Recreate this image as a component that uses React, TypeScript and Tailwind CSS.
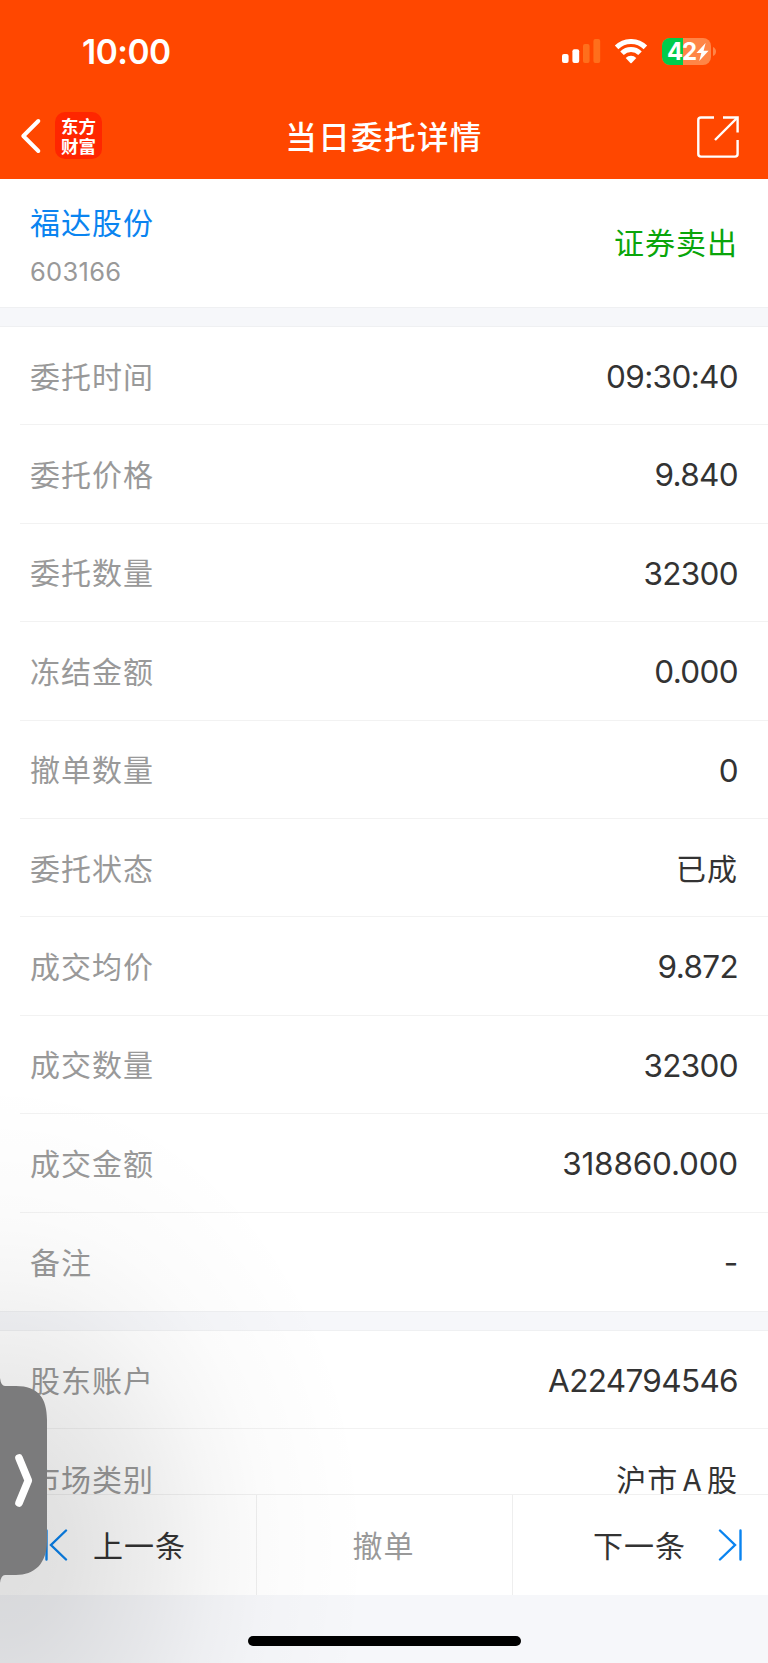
import type { ReactNode } from 'react'

type DetailItem = {
  label: string
  value: string
  cjk?: boolean
  wide?: boolean
}

const orderItems: DetailItem[] = [
  { label: '委托时间', value: '09:30:40' },
  { label: '委托价格', value: '9.840' },
  { label: '委托数量', value: '32300' },
  { label: '冻结金额', value: '0.000' },
  { label: '撤单数量', value: '0' },
  { label: '委托状态', value: '已成', cjk: true },
  { label: '成交均价', value: '9.872' },
  { label: '成交数量', value: '32300' },
  { label: '成交金额', value: '318860.000', wide: true },
  { label: '备注', value: '-', wide: true },
]

function StatusBar() {
  return (
    <div className="flex h-[102px] items-center justify-between pl-[82px] pr-[52px] text-white">
      <span className="pt-[3px] text-[33.5px] leading-none font-semibold tracking-[-0.5px]">10:00</span>
      <div className="flex items-center">
        <svg width="39" height="24" viewBox="0 0 39 24" fill="#fff">
          <rect x="0" y="15" width="6.6" height="9" rx="2" />
          <rect x="10.4" y="10.3" width="6.8" height="13.7" rx="2" />
          <rect x="21" y="5" width="6.6" height="19" rx="2" fill="#ff6f1c" />
          <rect x="31.4" y="0" width="6.8" height="24" rx="2" fill="#ff6f1c" />
        </svg>
        <svg className="ml-[13.5px]" width="34" height="25" viewBox="0 0 34 25" fill="none" stroke="#fff" strokeWidth="5">
          <path d="M2.6 8.4 A20.5 20.5 0 0 1 31.4 8.4" />
          <path d="M8 14.2 A12.8 12.8 0 0 1 26 14.2" />
          <path d="M11.7 18.9 A7.6 7.6 0 0 1 22.3 18.9 L17.6 24 Q17 24.6 16.4 24 Z" fill="#fff" stroke="none" />
        </svg>
        <div className="ml-3.5 flex items-center">
          <div className="relative flex h-[27px] w-[49px] items-center overflow-hidden rounded-[8px] bg-[#ff8547]">
            <div className="absolute inset-y-0 left-0 w-[21px] bg-[#00cc4b]" />
            <span className="relative pt-px pl-[5px] text-[24px] leading-none font-bold tracking-[-1.2px]">42</span>
            <svg className="absolute top-[5px] left-[33.5px]" width="13" height="18" viewBox="0 0 13 18" fill="#fff">
              <path d="M9.6 0 L0.4 9.9 H5.3 L3.2 18 L12.6 7.7 H7.6 Z" />
            </svg>
          </div>
          <svg className="ml-[2px]" width="3" height="9" viewBox="0 0 3 9" fill="#ff8547">
            <path d="M0 0 Q3 1.5 3 4.5 T0 9 Z" />
          </svg>
        </div>
      </div>
    </div>
  )
}

function NavBar() {
  return (
    <div className="flex h-[77px] items-start justify-between pr-[29px] pl-[20px] text-white">
      <div className="flex w-[120px] items-start pt-[10px]">
        <svg className="mt-[6px]" width="22" height="36" viewBox="0 0 22 36" fill="none" stroke="#fff" strokeWidth="4" strokeLinecap="round" strokeLinejoin="round">
          <path d="M18.3 3 L3.3 18 L18.3 33" />
        </svg>
        <div className="ml-[13px] flex h-[47px] w-[47px] flex-col items-center justify-center rounded-[10px] bg-[#ff2600] font-['Noto_Sans_CJK_SC',sans-serif] text-[17.5px] leading-[20px] font-bold">
          <span>东方</span>
          <span>财富</span>
        </div>
      </div>
      <h1 className="pt-[9px] pl-[9px] font-['Noto_Sans_CJK_SC',sans-serif] text-[31.5px] leading-[48px] font-medium tracking-[1.4px]">当日委托详情</h1>
      <div className="flex w-[120px] justify-end pt-[14px]">
        <svg width="42" height="42" viewBox="0 0 42 42" fill="none" stroke="#fff" strokeWidth="2.4">
          <path d="M17 1.5 H4 Q1.3 1.5 1.3 4 V38 Q1.3 40.6 4 40.6 H38 Q40.6 40.6 40.6 38 V24" />
          <path d="M26 1.5 H40.6 V16.5" />
          <path d="M40 2 L18 24" />
        </svg>
      </div>
    </div>
  )
}

function Row({ item, last }: { item: DetailItem; last?: boolean }) {
  return (
    <div className="h-[98.4px] shrink-0 pl-5">
      <div className={`flex h-full items-center justify-between pr-[30px] pl-[10px] ${last ? '' : 'border-b border-[#f2f2f2]'}`}>
        <span className="pb-px font-['Noto_Sans_CJK_SC',sans-serif] text-[30px] tracking-[1px] text-[#999]">{item.label}</span>
        {item.cjk ? (
          <span className="pb-px font-['Noto_Sans_CJK_SC',sans-serif] text-[30px] tracking-[1px] text-[#333] [word-spacing:-3px]">
            {item.value}
          </span>
        ) : (
          <span className={`pt-[2px] text-[31.5px] text-[#333] ${item.wide ? 'tracking-[-0.2px]' : 'tracking-[-0.65px]'}`}>
            {item.value}
          </span>
        )}
      </div>
    </div>
  )
}

function Divider() {
  return <div className="h-[20px] shrink-0 border-y border-[#eff0f2] bg-[#f6f7fa]" />
}

function FooterCell({ children, className }: { children: ReactNode; className: string }) {
  return (
    <button className={`flex items-center font-['Noto_Sans_CJK_SC',sans-serif] text-[30px] tracking-[1px] ${className}`}>
      {children}
    </button>
  )
}

export default function App() {
  return (
    <div className="relative flex h-[1663px] w-[768px] flex-col overflow-hidden bg-white font-[Inter,'Noto_Sans_CJK_SC',sans-serif]">
      <header className="h-[179px] shrink-0 bg-[#ff4700]">
        <StatusBar />
        <NavBar />
      </header>

      <section className="flex h-[128px] shrink-0 items-center justify-between pr-[30px] pl-[30px]">
        <div>
          <div className="font-['Noto_Sans_CJK_SC',sans-serif] text-[30px] leading-[44px] tracking-[1px] text-[#0a84f0]">福达股份</div>
          <div className="mt-[13px] text-[25.5px] leading-[32px] tracking-[0.3px] text-[#999]">603166</div>
        </div>
        <div className="pb-[4px] font-['Noto_Sans_CJK_SC',sans-serif] text-[30px] tracking-[1px] text-[#0aa50a]">证券卖出</div>
      </section>

      <Divider />
      <section className="flex h-[984px] shrink-0 flex-col">
        {orderItems.map((item, i) => (
          <Row key={item.label} item={item} last={i === orderItems.length - 1} />
        ))}
      </section>
      <Divider />

      <section className="h-[163px] shrink-0 overflow-hidden">
        <Row item={{ label: '股东账户', value: 'A224794546' }} />
        <Row item={{ label: '市场类别', value: '沪市 A 股', cjk: true }} last />
      </section>

      <footer className="h-[169px] shrink-0 bg-[#f6f7fa]">
        <div className="grid h-[101px] grid-cols-[257px_256px_1fr] border-t border-[#f0f0f0] bg-white">
          <FooterCell className="justify-start border-r border-[#eee] pl-[45px] text-[#333]">
            <svg width="24" height="32" viewBox="0 0 24 32" fill="none" stroke="#0a84f0" strokeWidth="2.4" strokeLinecap="round">
              <path d="M1.5 1.5 V30.5 M21 1.5 L6 16 L21 30.5" />
            </svg>
            <span className="ml-[24px] pb-[2px]">上一条</span>
          </FooterCell>
          <FooterCell className="justify-center border-r border-[#eee] pr-[2px] pb-[2px] text-[#999]">撤单</FooterCell>
          <FooterCell className="justify-end pr-[26px] text-[#333]">
            <span className="mr-[32px] pb-[2px]">下一条</span>
            <svg width="24" height="32" viewBox="0 0 24 32" fill="none" stroke="#0a84f0" strokeWidth="2.4" strokeLinecap="round">
              <path d="M22.5 1.5 V30.5 M2 1.5 L17 16 L2 30.5" />
            </svg>
          </FooterCell>
        </div>
      </footer>

      {/* shade cast by the floating drawer handle */}
      <div className="pointer-events-none absolute inset-0 bg-[radial-gradient(ellipse_370px_470px_at_0px_1550px,rgba(0,0,0,0.13)_0%,rgba(0,0,0,0.115)_18%,rgba(0,0,0,0.068)_43%,rgba(0,0,0,0.036)_58%,rgba(0,0,0,0.017)_72%,rgba(0,0,0,0.006)_86%,transparent_100%)]" />
      <div className="absolute top-[1378px] left-0">
        <svg width="48" height="206" viewBox="0 0 48 206">
          <path d="M0 0 Q1 8 5 8 H16 C38 8 47 20 47 42 V163 C47 186 34 197 16 197 H5 Q1 197 0 205 Z" fill="#7b7b7c" />
          <path d="M19 80 L28.3 102.5 L19 125" fill="none" stroke="#fff" strokeWidth="7.6" strokeLinecap="round" strokeLinejoin="round" />
        </svg>
      </div>
      <div className="absolute top-[1636px] left-[247.5px] h-[10px] w-[273.5px] rounded-full bg-black" />
    </div>
  )
}
